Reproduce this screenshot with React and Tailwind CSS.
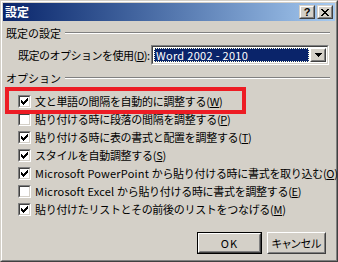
import React from "react";

const font = { fontFamily: "'Noto Sans CJK JP', 'Noto Sans', sans-serif" };

function Check() {
  const px = [
    [6, 0],
    [5, 1], [6, 1],
    [0, 2], [4, 2], [5, 2], [6, 2],
    [0, 3], [1, 3], [3, 3], [4, 3], [5, 3],
    [0, 4], [1, 4], [2, 4], [3, 4], [4, 4],
    [1, 5], [2, 5], [3, 5],
    [2, 6],
  ];
  return (
    <svg width="7" height="7" viewBox="0 0 7 7" shapeRendering="crispEdges">
      {px.map(([x, y], i) => (
        <rect key={i} x={x} y={y} width="1" height="1" fill="#000" />
      ))}
    </svg>
  );
}

function CheckBox({ checked }) {
  return (
    <div className="w-[13px] h-[13px] shrink-0 border border-t-[#808080] border-l-[#808080] border-r-white border-b-white">
      <div className="w-full h-full border border-t-[#404040] border-l-[#404040] border-r-[#d4d0c8] border-b-[#d4d0c8] bg-white flex items-center justify-center">
        {checked && <Check />}
      </div>
    </div>
  );
}

function Row({ checked, children }) {
  return (
    <div className="h-[18px] flex items-center ml-[12px]">
      <CheckBox checked={checked} />
      <span className="ml-[4px] text-[11px] leading-[14px] tracking-[-0.3px] text-black whitespace-nowrap">{children}</span>
    </div>
  );
}

function Lat({ children }) {
  return <span className="tracking-[0.2px]">{children}</span>;
}

function Header({ children }) {
  return (
    <div className="h-[14px] flex items-center">
      <span className="text-[11px] leading-[14px] text-black whitespace-nowrap">{children}</span>
      <div className="flex-1 ml-[4px] mr-[5px] border-t border-b border-t-[#808080] border-b-white" />
    </div>
  );
}

function RaisedBtn({ className, children }) {
  return (
    <div className={"border border-t-white border-l-white border-r-[#404040] border-b-[#404040] " + className}>
      <div className="w-full h-full border border-t-[#d4d0c8] border-l-[#d4d0c8] border-r-[#808080] border-b-[#808080] bg-[#d4d0c8] flex items-center justify-center">
        {children}
      </div>
    </div>
  );
}

function TitleBtn({ children }) {
  return (
    <div className="w-[16px] h-[14px] border border-t-[#d4d0c8] border-l-[#d4d0c8] border-r-[#404040] border-b-[#404040]">
      <div className="w-full h-full border border-t-white border-l-white border-r-[#808080] border-b-[#808080] bg-[#d4d0c8] flex items-center justify-center">
        {children}
      </div>
    </div>
  );
}

export default function App() {
  return (
    <div className="w-[338px] h-[262px] bg-[#d4d0c8] relative overflow-hidden" style={font}>
      <div className="w-full h-full border border-t-[#d4d0c8] border-l-[#d4d0c8] border-r-[#404040] border-b-[#404040]">
        <div className="w-full h-full border border-t-white border-l-white border-r-[#808080] border-b-[#808080] p-[1px] flex flex-col">
          {/* Title bar */}
          <div className="h-[18px] shrink-0 flex items-center bg-gradient-to-r from-[#0a246a] to-[#a6caf0] pl-[2px] pr-[2px]">
            <span className="text-white font-bold text-[12px] leading-[14px] flex-1">設定</span>
            <TitleBtn>
              <span className="text-black font-bold text-[11px] leading-[11px]" style={{ fontFamily: "'Liberation Sans', sans-serif" }}>?</span>
            </TitleBtn>
            <div className="w-[2px]" />
            <TitleBtn>
              <svg width="8" height="7" viewBox="0 0 8 7" shapeRendering="crispEdges">
                {[0, 1, 2, 3, 4, 5, 6].map((i) => (
                  <g key={i}>
                    <rect x={i} y={i} width="2" height="1" fill="#000" />
                    <rect x={6 - i} y={i} width="2" height="1" fill="#000" />
                  </g>
                ))}
              </svg>
            </TitleBtn>
          </div>

          {/* Body */}
          <div className="flex-1 flex flex-col pl-[3px]">
            <div className="mt-[5px]">
              <Header>既定の設定</Header>
            </div>
            <div className="mt-[5px] flex items-center h-[20px]">
              <span className="ml-[12px] text-[11px] leading-[14px] tracking-[-0.5px] text-black whitespace-nowrap flex-1 min-w-0">
                既定のオプションを使用(<u>D</u>):
              </span>
              <div className="w-[178px] h-[20px] shrink-0 mr-[6px] border border-t-[#808080] border-l-[#808080] border-r-white border-b-white">
                <div className="w-full h-full border border-t-[#404040] border-l-[#404040] border-r-[#d4d0c8] border-b-[#d4d0c8] bg-white flex p-[1px]">
                  <div className="flex-1 bg-[#0a246a] border border-dotted border-[#ffd] flex items-center pl-[1px]">
                    <span className="text-white text-[11px] leading-[14px] tracking-[0.3px] whitespace-nowrap">Word 2002 - 2010</span>
                  </div>
                  <RaisedBtn className="w-[16px] h-full ml-[1px]">
                    <svg width="7" height="4" viewBox="0 0 7 4" shapeRendering="crispEdges">
                      <rect x="0" y="0" width="7" height="1" fill="#000" />
                      <rect x="1" y="1" width="5" height="1" fill="#000" />
                      <rect x="2" y="2" width="3" height="1" fill="#000" />
                      <rect x="3" y="3" width="1" height="1" fill="#000" />
                    </svg>
                  </RaisedBtn>
                </div>
              </div>
            </div>
            <div className="mt-[6px]">
              <Header>オプション</Header>
            </div>
            <div className="mt-[7px] flex flex-col">
              <Row checked>文と単語の間隔を自動的に調整する(<u>W</u>)</Row>
              <Row>貼り付ける時に段落の間隔を調整する(<u>P</u>)</Row>
              <Row checked>貼り付ける時に表の書式と配置を調整する(<u>T</u>)</Row>
              <Row checked>スタイルを自動調整する(<u>S</u>)</Row>
              <Row checked><Lat>Microsoft PowerPoint </Lat>から貼り付ける時に書式を取り込む(<u>O</u>)</Row>
              <Row><Lat>Microsoft Excel </Lat>から貼り付ける時に書式を調整する(<u>E</u>)</Row>
              <Row checked>貼り付けたリストとその前後のリストをつなげる(<u>M</u>)</Row>
            </div>
            <div className="mt-[14px] flex justify-end pr-[9px] gap-[5px]">
              <div className="w-[65px] h-[22px] border border-black">
                <RaisedBtn className="w-full h-full">
                  <span className="text-[11px] leading-[14px] tracking-[1px] text-black">OK</span>
                </RaisedBtn>
              </div>
              <RaisedBtn className="w-[59px] h-[22px]">
                <span className="text-[11px] leading-[14px] text-black" style={{ fontFeatureSettings: '"palt"' }}>キャンセル</span>
              </RaisedBtn>
            </div>
          </div>
        </div>
      </div>
      <div className="absolute left-[5px] top-[87px] w-[241px] h-[27px] border-[4px] border-[#ed1c24]" />
    </div>
  );
}
